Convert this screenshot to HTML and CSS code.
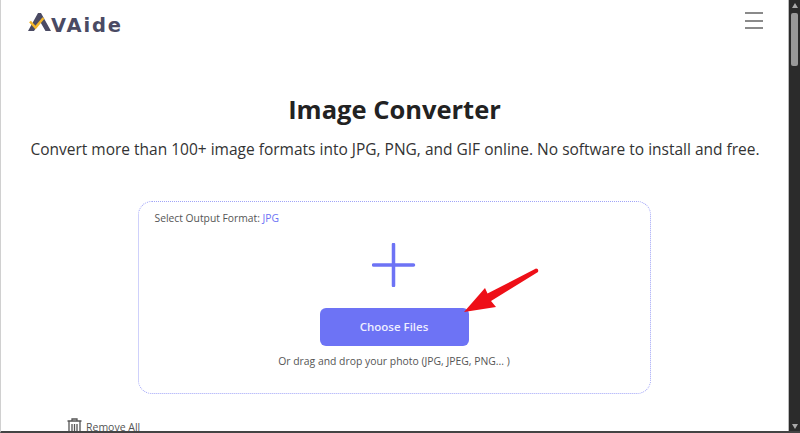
FILE: index.html
```html
<!DOCTYPE html>
<html lang="en">
<head>
<meta charset="utf-8">
<title>Image Converter</title>
<link rel="stylesheet" href="styles.css">
</head>
<body>
<div class="window">
  <div class="page">
    <header class="topbar">
      <div class="logo">
        <svg class="logo-mark" width="24" height="20" viewBox="0 0 24 20">
          <path d="M0 19 L10 1 L13 1 L23 19 L17.500 19 L12 9.500 L6 19 Z" fill="#4a4a63"/>
          <path d="M2 9.500 L7.500 15.500 L15.500 6" fill="none" stroke="#f2b62c" stroke-width="2.500"/>
        </svg>
        <span class="logo-text">VAide</span>
      </div>
      <button class="menu" aria-label="Menu"><span></span><span></span><span></span></button>
    </header>
    <main class="main">
      <h1 class="title">Image Converter</h1>
      <p class="lead">Convert more than 100+ image formats into JPG, PNG, and GIF online. No software to install and free.</p>
      <section class="drop">
        <div class="format">Select Output Format: <span class="format-value">JPG</span></div>
        <svg class="plus" width="44" height="44" viewBox="0 0 44 44">
          <path d="M1.500 22 H41.500 M21.500 1.500 V42.500" stroke="#6d73f5" stroke-width="3.500" stroke-linecap="round"/>
        </svg>
        <div class="choose-wrap">
          <button class="choose">Choose Files</button>
          <svg class="arrow" width="82" height="52" viewBox="0 0 82 52">
            <path d="M4 47 L25 23 L27.500 28.500 L76 3.500 Q79 3.500 78 7 L31 36 L36 42 Z" fill="#ee0f17"/>
          </svg>
        </div>
        <p class="hint">Or drag and drop your photo (JPG, JPEG, PNG... )</p>
      </section>
      <div class="remove">
        <svg width="15" height="16" viewBox="0 0 15 16">
          <path d="M0.500 3 H14.500 M5 3 V1 H10 V3 M2 3 V15 H13 V3 M5 6 V13 M7.500 6 V13 M10 6 V13" fill="none" stroke="#555" stroke-width="1.300"/>
        </svg>
        <span>Remove All</span>
      </div>
    </main>
  </div>
  <div class="scrollbar">
    <span class="tri-up"></span>
    <span class="thumb"></span>
    <span class="tri-down"></span>
  </div>
</div>
</body>
</html>
```
FILE: styles.css
```css
* { box-sizing: border-box; }
html, body { margin: 0; height: 100%; overflow: hidden; background: #fff; }
body { font-family: "Open Sans", "Liberation Sans", sans-serif; color: #222; }
.window { width: 800px; height: 433px; display: flex; border-left: 1px solid #d0d0d0; border-bottom: 2px solid #444; overflow: hidden; }
.page { flex: 1; min-width: 0; overflow: hidden; display: flex; flex-direction: column; border-right: 1px solid #bbb; }
.topbar { display: flex; justify-content: space-between; align-items: flex-start; padding: 12px 25px 0 27px; height: 52px; flex: none; }
.logo { display: flex; align-items: flex-end; height: 20px; }
.logo-mark { flex: none; margin-right: -1px; }
.logo-text { font-family: "DejaVu Sans", sans-serif; font-weight: 700; font-size: 19.500px; letter-spacing: 1.800px; line-height: 13px; color: #4a4a63; }
.menu { display: flex; flex-direction: column; gap: 5.500px; width: 18px; padding: 0; border: 0; background: none; }
.menu span { height: 2px; background: #8a8a8a; display: block; }
.main { display: flex; flex-direction: column; align-items: center; }
.title { margin: 39px 0 0; font-size: 25.500px; line-height: 36px; font-weight: 700; color: #222; }
.lead { margin: 10px 0 0 1px; font-size: 15.500px; line-height: 24px; color: #333; white-space: nowrap; }
.drop { width: 513px; height: 193px; margin: 40px 1px 0 0; border: 1.500px dotted #a0a4f8; border-radius: 14px; display: flex; flex-direction: column; align-items: center; padding: 8.500px 16px 0; }
.format { align-self: flex-start; font-size: 10.300px; line-height: 14px; color: #555; }
.format-value { color: #6d73f5; }
.plus { margin-top: 18px; display: block; }
.choose-wrap { position: relative; margin-top: 21px; }
.choose { display: block; width: 149px; height: 38px; border: 0; border-radius: 6px; background: #6d73f5; color: #eef; font: 600 11.500px "Open Sans", sans-serif; }
.arrow { position: absolute; left: 140px; top: -43px; }
.hint { margin: 8px 0 0; font-size: 10.400px; line-height: 14px; color: #555; }
.remove { align-self: flex-start; margin: 24px 0 0 66px; display: flex; align-items: flex-end; gap: 4px; font-size: 10.500px; line-height: 14px; color: #555; }
.scrollbar { width: 11px; flex: none; background: #2b2b2b; display: flex; flex-direction: column; align-items: center; padding: 3px 0 2px; }
.tri-up { width: 0; height: 0; border: 3.500px solid transparent; border-top: 0; border-bottom: 5px solid #aaa; }
.thumb { width: 7px; height: 53px; margin-top: 5px; border-radius: 2px; background: #999; }
.tri-down { margin-top: auto; width: 0; height: 0; border: 3.500px solid transparent; border-bottom: 0; border-top: 5px solid #aaa; }
```
